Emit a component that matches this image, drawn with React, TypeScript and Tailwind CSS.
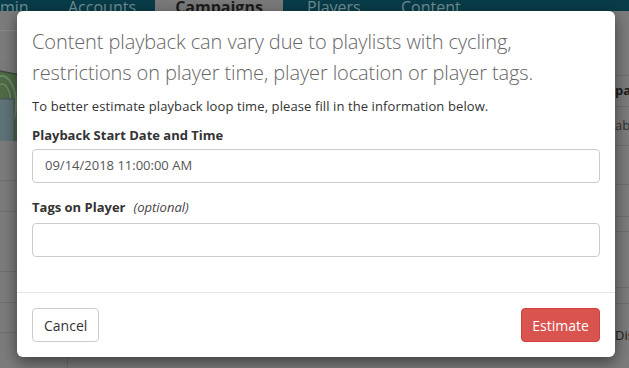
import React from "react";

const font = { fontFamily: '"Open Sans", "Noto Sans", Arial, sans-serif' };

function MapThumb() {
  return (
    <svg width="40" height="100" viewBox="0 0 40 100" className="block">
      <rect x="0" y="0" width="40" height="100" fill="#7b7b7b" />
      <path d="M0 12 L30 18 L34 88 L0 80 Z" fill="#4f6b46" />
      <ellipse cx="2" cy="45" rx="14" ry="28" fill="none" stroke="#6d8a66" strokeWidth="2" />
      <ellipse cx="2" cy="45" rx="9" ry="20" fill="none" stroke="#6d8a66" strokeWidth="1.5" />
      <path d="M0 12 L30 18" stroke="#3d4a3d" strokeWidth="1.5" />
      <path d="M0 80 L34 88" stroke="#3d4a3d" strokeWidth="1.5" />
      <rect x="-2" y="40" width="16" height="72" fill="#5f7378" stroke="#4a5558" strokeWidth="1" />
    </svg>
  );
}

export default function App() {
  return (
    <div className="relative w-[629px] h-[368px] overflow-hidden bg-[#7c7c7c]" style={font}>
      {/* Background page (dimmed by modal backdrop) */}
      <div className="flex flex-col w-full h-full">
        <div className="h-[11px] bg-[#083c48] flex items-end overflow-hidden text-[16px] leading-[16px] text-[#6f8c93]">
          <div className="w-[20px] -mb-[4px] pl-0">min</div>
          <div className="ml-[48px] w-[87px] -mb-[4px]">Accounts</div>
          <div className="w-[128px] h-full bg-[#7a7a7a] flex items-end justify-center">
            <span className="-mb-[4px] font-bold text-[#1c1c1c]">Campaigns</span>
          </div>
          <div className="ml-[24px] w-[94px] -mb-[4px]">Players</div>
          <div className="-mb-[4px]">Content</div>
        </div>
        <div className="flex flex-1">
          <div className="w-[68px] flex flex-col border-r border-[#6e6e6e]">
            <div className="h-[20px] border-b border-[#8a8a8a]" />
            <div className="h-[110px] overflow-hidden pt-[28px]">
              <MapThumb />
            </div>
            <div className="h-[40px] border-b border-[#6e6e6e]" />
            <div className="h-[31px] border-b border-[#6e6e6e]" />
            <div className="h-[60px] border-b border-[#6e6e6e]" />
            <div className="h-[31px] border-b border-[#6e6e6e]" />
            <div className="h-[30px] border-b border-[#6e6e6e]" />
          </div>
          <div className="flex-1 flex flex-col pl-[16px] pr-[0px]">
            <div className="h-[65px] border-b border-[#6e6e6e]" />
            <div className="h-[31px] border-b border-[#6e6e6e] flex items-center justify-end text-[13px] font-bold text-[#1e1e1e]">
              <span className="w-[14px] overflow-hidden whitespace-nowrap">paign</span>
            </div>
            <div className="h-[39px] border-b border-[#6e6e6e] flex items-center justify-end text-[13px] text-[#333]">
              <span className="w-[14px] overflow-hidden whitespace-nowrap">able</span>
            </div>
            <div className="h-[39px] border-b border-[#6e6e6e]" />
            <div className="h-[32px] border-b border-[#6e6e6e]" />
            <div className="h-[15px] border-b border-[#6e6e6e]" />
            <div className="h-[56px] border-b border-[#6e6e6e]" />
            <div className="h-[16px] border-b border-[#6e6e6e]" />
            <div className="flex items-start">
              <div className="w-[477px] h-[31px] border border-[#5c5c5c] rounded-[4px] mt-[14px]" />
              <div className="flex-1 flex justify-end pt-[22px] text-[13px] text-[#222]">
                <span className="w-[14px] overflow-hidden whitespace-nowrap">Disabled</span>
              </div>
            </div>
          </div>
        </div>
      </div>

      {/* Modal */}
      <div className="absolute left-[17px] top-[11px] w-[598px] bg-white rounded-[6px] shadow-[0_5px_15px_rgba(0,0,0,0.5)]">
        <div className="px-[15px] pt-[15px]">
          <p className="text-[20px] leading-[31px] font-light text-[#666] tracking-[-0.1px]">
            Content playback can vary due to playlists with cycling,
            <br />
            restrictions on player time, player location or player tags.
          </p>
          <p className="mt-[9px] text-[13px] leading-[18px] text-[#333] tracking-[0.1px]">
            To better estimate playback loop time, please fill in the information below.
          </p>
          <div className="mt-[11px] text-[13px] leading-[18px] font-bold text-[#333]">
            Playback Start Date and Time
          </div>
          <div className="mt-[5px] h-[34px] border border-[#ccc] rounded-[4px] flex items-center px-[12px] text-[13px] text-[#555]">
            09/14/2018 11:00:00 AM
          </div>
          <div className="mt-[15px] text-[13px] leading-[18px] text-[#333]">
            <span className="font-bold">Tags on Player</span>
            <span className="ml-[8px] italic text-[#444]">(optional)</span>
          </div>
          <div className="mt-[7px] h-[34px] border border-[#ccc] rounded-[4px]" />
          <div className="h-[35px]" />
        </div>
        <div className="border-t border-[#e5e5e5] px-[15px] py-[15px] flex justify-between">
          <button className="h-[34px] px-[11px] border border-[#ccc] rounded-[4px] bg-white text-[14px] text-[#333]">
            Cancel
          </button>
          <button className="h-[34px] w-[79px] border border-[#d43f3a] rounded-[4px] bg-[#d9534f] text-[14px] text-white">
            Estimate
          </button>
        </div>
      </div>
    </div>
  );
}
